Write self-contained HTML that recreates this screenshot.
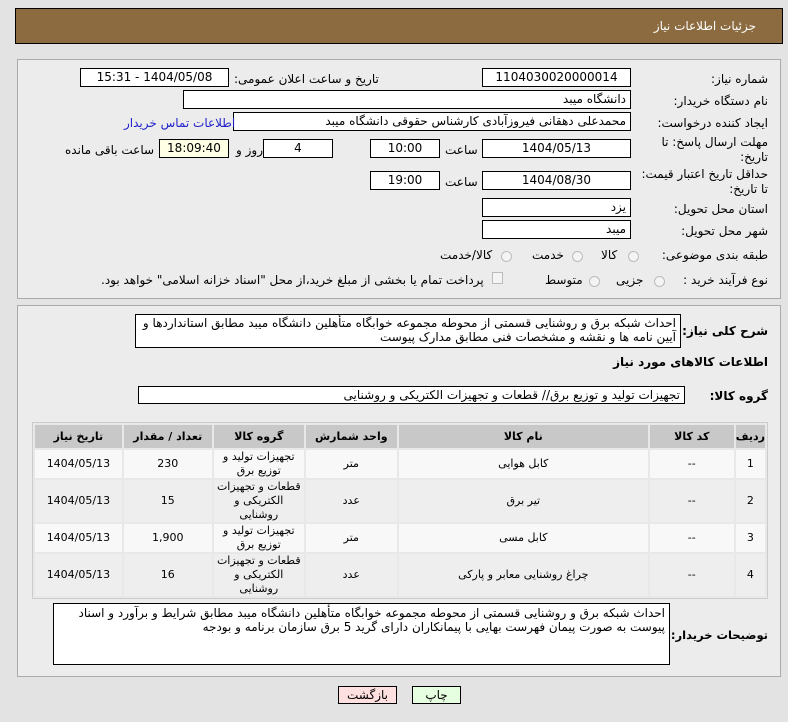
<!DOCTYPE html>
<html><head><meta charset="utf-8"><style>
*{margin:0;padding:0;box-sizing:border-box}
body{width:788px;height:722px;background:#e3e3e3;font-family:"DejaVu Sans","Liberation Sans",sans-serif;font-size:11px;color:#000;position:relative;overflow:hidden;direction:rtl}
.a{position:absolute;white-space:nowrap}
.box{position:absolute;background:#fff;border:1px solid #000;height:19px;line-height:17px;padding:0 4px;font-size:12px}
.c{text-align:center}
.lbl{position:absolute;white-space:nowrap;font-size:12px}
.b{font-weight:bold}
.panel{position:absolute;border:1px solid #aaa;background:#ececec}
table{position:absolute;left:32px;top:422px;width:736px;border-collapse:separate;border-spacing:2px;background:#e8e8e8;border:1px solid #ccc;direction:rtl}
td,th{text-align:center;font-size:11px;line-height:14px}
th{background:#c8c8c8;height:23px;font-weight:bold}
tr.r1 td{background:#f8f8f8}
tr.r2 td{background:#eeeeee}
.radio{display:inline-block;width:11px;height:11px;border:1px solid #bbb;border-radius:50%;background:#f4f4f4;vertical-align:middle}
</style></head><body>
<div class="a" style="left:15px;top:8px;width:768px;height:36px;background:#8b6b3f;border:1px solid #000"></div>
<div class="a" style="right:32px;top:19px;color:#fff;font-size:12px">جزئیات اطلاعات نیاز</div>

<div class="panel" style="left:17px;top:59px;width:764px;height:240px"></div>
<div class="panel" style="left:17px;top:305px;width:764px;height:372px"></div>

<div class="lbl" style="right:20px;top:72px">شماره نیاز:</div>
<div class="box c" style="left:482px;top:68px;width:149px">1104030020000014</div>
<div class="lbl" style="left:234px;top:72px">تاریخ و ساعت اعلان عمومی:</div>
<div class="box c" style="left:80px;top:68px;width:149px">1404/05/08 - 15:31</div>

<div class="lbl" style="right:20px;top:94px">نام دستگاه خریدار:</div>
<div class="box" style="left:183px;top:90px;width:448px;text-align:right">دانشگاه میبد</div>

<div class="lbl" style="right:20px;top:116px">ایجاد کننده درخواست:</div>
<div class="box" style="left:233px;top:112px;width:398px;text-align:right">محمدعلی دهقانی فیروزآبادی کارشناس حقوقی دانشگاه میبد</div>
<div class="lbl" style="left:124px;top:116px;color:#2222cc">اطلاعات تماس خریدار</div>

<div class="lbl" style="right:20px;top:135px;line-height:15px">مهلت ارسال پاسخ: تا<br>تاریخ:</div>
<div class="box c" style="left:482px;top:139px;width:149px">1404/05/13</div>
<div class="lbl" style="left:445px;top:143px">ساعت</div>
<div class="box c" style="left:370px;top:139px;width:70px">10:00</div>
<div class="box c" style="left:263px;top:139px;width:70px">4</div>
<div class="lbl" style="left:236px;top:143px">روز و</div>
<div class="box c" style="left:159px;top:139px;width:70px;background:#ffffe6">18:09:40</div>
<div class="lbl" style="left:65px;top:143px">ساعت باقی مانده</div>

<div class="lbl" style="right:20px;top:167px;line-height:15px">حداقل تاریخ اعتبار قیمت:<br>تا تاریخ:</div>
<div class="box c" style="left:482px;top:171px;width:149px">1404/08/30</div>
<div class="lbl" style="left:445px;top:175px">ساعت</div>
<div class="box c" style="left:370px;top:171px;width:70px">19:00</div>

<div class="lbl" style="right:20px;top:202px">استان محل تحویل:</div>
<div class="box" style="left:482px;top:198px;width:149px;text-align:right">یزد</div>
<div class="lbl" style="right:20px;top:224px">شهر محل تحویل:</div>
<div class="box" style="left:482px;top:220px;width:149px;text-align:right">میبد</div>

<div class="lbl" style="right:20px;top:248px">طبقه بندی موضوعی:</div>
<div class="lbl" style="left:628px;top:249px"><span class="radio"></span></div>
<div class="lbl" style="left:601px;top:248px">کالا</div>
<div class="lbl" style="left:572px;top:249px"><span class="radio"></span></div>
<div class="lbl" style="left:532px;top:248px">خدمت</div>
<div class="lbl" style="left:501px;top:249px"><span class="radio"></span></div>
<div class="lbl" style="left:440px;top:248px">کالا/خدمت</div>

<div class="lbl" style="right:20px;top:273px">نوع فرآیند خرید :</div>
<div class="lbl" style="left:654px;top:274px"><span class="radio"></span></div>
<div class="lbl" style="left:616px;top:273px">جزیی</div>
<div class="lbl" style="left:589px;top:274px"><span class="radio"></span></div>
<div class="lbl" style="left:545px;top:273px">متوسط</div>
<div class="lbl" style="left:492px;top:272px"><span style="display:inline-block;width:11px;height:12px;border:1px solid #bbb;background:#f4f4f4"></span></div>
<div class="lbl" style="left:101px;top:273px">پرداخت تمام یا بخشی از مبلغ خرید،از محل "اسناد خزانه اسلامی" خواهد بود.</div>

<div class="lbl b" style="right:20px;top:324px">شرح کلی نیاز:</div>
<div class="box" style="left:135px;top:314px;width:546px;height:34px;line-height:14px;text-align:right;white-space:normal;padding-top:1px">احداث شبکه برق و روشنایی قسمتی از محوطه مجموعه خوابگاه متأهلین دانشگاه میبد مطابق استانداردها و آیین نامه ها و نقشه و مشخصات فنی مطابق مدارک پیوست</div>
<div class="lbl b" style="right:20px;top:355px">اطلاعات کالاهای مورد نیاز</div>
<div class="lbl b" style="right:20px;top:389px">گروه کالا:</div>
<div class="box" style="left:138px;top:386px;width:547px;height:18px;line-height:16px;text-align:right">تجهیزات تولید و توزیع برق// قطعات و تجهیزات الکتریکی و روشنایی</div>

<table>
<tr><th style="width:27px">ردیف</th><th style="width:84px">کد کالا</th><th style="width:249px">نام کالا</th><th style="width:91px">واحد شمارش</th><th style="width:90px">گروه کالا</th><th style="width:88px">تعداد / مقدار</th><th>تاریخ نیاز</th></tr>
<tr class="r1" style="height:28px"><td>1</td><td>--</td><td>کابل هوایی</td><td>متر</td><td>تجهیزات تولید و<br>توزیع برق</td><td>230</td><td>1404/05/13</td></tr>
<tr class="r2" style="height:42px"><td>2</td><td>--</td><td>تیر برق</td><td>عدد</td><td>قطعات و تجهیزات<br>الکتریکی و<br>روشنایی</td><td>15</td><td>1404/05/13</td></tr>
<tr class="r1" style="height:28px"><td>3</td><td>--</td><td>کابل مسی</td><td>متر</td><td>تجهیزات تولید و<br>توزیع برق</td><td>1,900</td><td>1404/05/13</td></tr>
<tr class="r2" style="height:42px"><td>4</td><td>--</td><td>چراغ روشنایی معابر و پارکی</td><td>عدد</td><td>قطعات و تجهیزات<br>الکتریکی و<br>روشنایی</td><td>16</td><td>1404/05/13</td></tr>
</table>

<div class="lbl b" style="right:20px;top:628px;font-size:11.5px">توضیحات خریدار:</div>
<div class="box" style="left:53px;top:603px;width:617px;height:62px;line-height:14px;text-align:right;white-space:normal;padding-top:2px">احداث شبکه برق و روشنایی قسمتی از محوطه مجموعه خوابگاه متأهلین دانشگاه میبد مطابق شرایط و برآورد و اسناد پیوست به صورت پیمان فهرست بهایی با پیمانکاران دارای گرید 5 برق سازمان برنامه و بودجه</div>

<div class="box c" style="left:338px;top:686px;width:59px;height:18px;line-height:16px;background:#ffe0e0">بازگشت</div>
<div class="box c" style="left:412px;top:686px;width:49px;height:18px;line-height:16px;background:#e6ffe0">چاپ</div>
</body></html>
